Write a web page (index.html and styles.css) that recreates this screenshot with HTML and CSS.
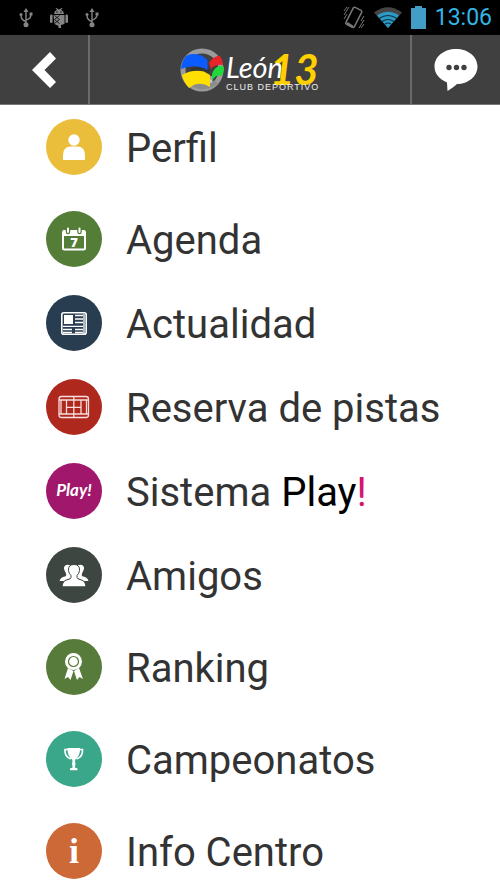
FILE: index.html
```html
<!DOCTYPE html>
<html lang="es">
<head>
<meta charset="utf-8">
<meta name="viewport" content="width=device-width, initial-scale=1">
<title>León 13 Club Deportivo</title>
<link rel="stylesheet" href="styles.css">
</head>
<body>
<div class="status">
  <div class="status-group notices">
    <svg viewBox="0 0 14 20" width="14" height="20" aria-hidden="true"><g fill="none" stroke="#858585" stroke-width="1.4"><path d="M7 3v14M7 13.500Q2 12 2 7.500M7 12Q12 11 12 6"/></g><g fill="#858585"><path d="M7 0l2.500 4h-5z"/><circle cx="2" cy="6.500" r="1.500"/><path d="M10.500 4.500h3v3h-3z"/><circle cx="7" cy="16.800" r="2.500"/></g></svg>
    <svg viewBox="0 0 18 20" width="18" height="20" aria-hidden="true"><g fill="#858585"><path d="M4 6q.3-3.300 3-4.300L5.500 0l1-.3L8 1.300h2L11.500-.3l1 .3L11 1.700q2.700 1 3 4.300z"/><rect x="0" y="6.500" width="2.600" height="8.500" rx="1.200"/><rect x="15.400" y="6.500" width="2.600" height="8.500" rx="1.200"/><path d="M3.500 7h11v9l-3.500 1v3H8.500v-2L4.500 16z"/></g><g fill="none" stroke="#181818" stroke-width="1"><path d="M4.500 7.500l5 4-5 4M9.500 7.500l-5 4 5 4"/></g><circle cx="7" cy="4" r=".7"/><circle cx="11" cy="4" r=".7"/></svg>
    <svg viewBox="0 0 14 20" width="14" height="20" aria-hidden="true"><g fill="none" stroke="#858585" stroke-width="1.4"><path d="M7 3v14M7 13.500Q2 12 2 7.500M7 12Q12 11 12 6"/></g><g fill="#858585"><path d="M7 0l2.500 4h-5z"/><circle cx="2" cy="6.500" r="1.500"/><path d="M10.500 4.500h3v3h-3z"/><circle cx="7" cy="16.800" r="2.500"/></g></svg>
  </div>
  <div class="status-group system">
    <svg viewBox="0 0 22 25" width="22" height="25" aria-hidden="true"><g fill="none" stroke="#777"><rect x="6" y="3" width="9.500" height="19" rx="1.500" stroke-width="1.500" transform="rotate(27 11 12.500)"/><path d="M1 6l3-4M1 10l5-8M1 14l3-5M21 19l-3 4M21 15l-5 8M21 11l-3 5"/></g><path d="M4 18l6 4" stroke="#777" stroke-width="2.500"/></svg>
    <svg viewBox="0 0 28 21" width="28" height="21" aria-hidden="true"><path fill="#444" d="M14 21L0 5.500Q14-5 28 5.500z"/><path fill="#2d9ac4" d="M14 21L3 8.500Q14 1 25 8.500z"/><g fill="none" stroke="#0b3040" stroke-width="1.200"><path d="M5 11.500q9-6 18 0M8 14.500q6-4 12 0M11 17q3-2 6 0"/></g></svg>
    <svg viewBox="0 0 15 23" width="15" height="23" aria-hidden="true"><path fill="#429ec6" d="M4 0h7v2h4v21H0V2h4z"/></svg>
    <time class="clock">13:06</time>
  </div>
</div>

<header class="bar">
  <button class="bar-button back" type="button" aria-label="Volver">
    <svg viewBox="0 0 24 36" width="24" height="36" aria-hidden="true"><path fill="#fff" d="M18 0l6 6.500L12.500 18 24 30l-6 6L0 18z"/></svg>
  </button>
  <div class="brand">
    <svg class="logo" viewBox="0 0 140 50" width="140" height="50" role="img" aria-label="León 13 Club Deportivo">
      <circle cx="22" cy="25" r="19" fill="none" stroke="#9b9b9b" stroke-width="5"/>
      <path d="M6 37Q22 28 38 38Q22 51 6 37z" fill="#8b8b8b"/>
      <path d="M9 24q12-5 22 1l-4 4-14-1z" fill="#343434"/>
      <path fill="#0b5cff" d="M1 24Q2 12 9 9.500Q20 7 27.500 15v10Q15 18 1 24z"/>
      <path fill="#e82428" d="M29 18Q34 10 40 11q3 4 3 9-8-1-12 4z"/>
      <path fill="#20d83c" d="M32 34q-1-8 5-12 5-2 7 0 0 7-3 9-5-2-9 5z"/>
      <path fill="#ffdf00" d="M2 30Q12 24 24 26.500l6 3.500v12Q19 35 9 43Q4 38 2 30z"/>
      <path d="M31 31v7" stroke="#fff" stroke-width="1"/>
      <text class="logo-number" x="90" y="40">13</text>
      <text class="logo-name" x="46" y="33">León</text>
      <text class="logo-caption" x="46" y="45">CLUB DEPORTIVO</text>
    </svg>
  </div>
  <button class="bar-button chat" type="button" aria-label="Mensajes">
    <svg viewBox="0 0 44 42" width="44" height="42" aria-hidden="true"><path fill="#fff" d="M22 0C34 0 43.500 7.500 43.500 17.500S34 35 23 35q-3 3-9.500 7l-.5-8.500C5 30 .5 24.500.5 17.500.5 7.500 10 0 22 0z"/><g fill="#404040"><circle cx="15" cy="18.500" r="2.700"/><circle cx="22.500" cy="18.500" r="2.700"/><circle cx="30" cy="18.500" r="2.700"/></g></svg>
  </button>
</header>

<nav aria-label="Menú principal">
  <ul class="menu">
    <li class="roomy"><a class="item" href="#perfil">
      <svg class="icon perfil" viewBox="0 0 56 56" aria-hidden="true"><g fill="#fff"><circle cx="28" cy="21" r="5.700"/><path d="M17 41v-5q0-8.500 8-8.500h6q8 0 8 8.500v5z"/></g></svg>
      <span>Perfil</span></a></li>
    <li><a class="item" href="#agenda">
      <svg class="icon agenda" viewBox="0 0 56 56" aria-hidden="true"><rect x="17" y="20" width="22" height="18.500" rx="1.500" fill="none" stroke="#fff" stroke-width="2"/><path fill="#fff" d="M17 19h22v6H17z"/><g stroke="#547d38" stroke-width="4.500" stroke-linecap="round"><path d="M22 18v3M33.500 18v3"/></g><g stroke="#fff" stroke-width="2" stroke-linecap="round"><path d="M22 17.500v3.500M33.500 17.500v3.500"/></g><text class="icon-day" x="28" y="36">7</text></svg>
      <span>Agenda</span></a></li>
    <li><a class="item" href="#actualidad">
      <svg class="icon actualidad" viewBox="0 0 56 56" aria-hidden="true"><rect x="15.800" y="17.800" width="24.400" height="21.400" rx="2" fill="none" stroke="#fff" stroke-width="1.600"/><path fill="#fff" d="M18 20h9v9h-9z"/><g fill="none" stroke="#fff" stroke-width="1.300"><path d="M29 20.500h8M29 24h8M29 27.500h8M17 31.300h20M17 34.500h9M17 37.500h9M29 34.500h8M29 37.500h8M38 19v20"/></g></svg>
      <span>Actualidad</span></a></li>
    <li><a class="item" href="#pistas">
      <svg class="icon pistas" viewBox="0 0 56 56" aria-hidden="true"><g fill="none" stroke="#f8dedc" stroke-width="1.300"><rect x="13" y="17.500" width="29.500" height="21" rx="2.500"/><path d="M13 21h29.500M13 35h29.500M27.800 17.500v21M20.500 21v14M35 21v14M20.500 28.300H35M15 21v14M40.500 21v14"/></g></svg>
      <span>Reserva de pistas</span></a></li>
    <li><a class="item" href="#play">
      <svg class="icon play" viewBox="0 0 56 56" aria-hidden="true"><text class="icon-play" x="28" y="33">Play!</text></svg>
      <span>Sistema <span class="play-word">Play</span><span class="play-mark">!</span></span></a></li>
    <li class="roomy"><a class="item" href="#amigos">
      <svg class="icon amigos" viewBox="0 0 56 56" aria-hidden="true"><g fill="#fff"><path d="M20 18q4-1 6 2l-1 11-6 3h-5.500q1-4 5.500-4.500 2-1 .8-3.500-3.800-6 .2-8z"/><path d="M36 18q-4-1-6 2l1 11 6 3h5.500q-1-4-5.500-4.500-2-1-.8-3.500 3.800-6-.2-8z"/><path stroke="#3e4641" stroke-width="1" d="M28 17.500q6 0 5.500 6-.3 3-2.500 5v2q0 1.500 4 2.300 4.500 1 5 7H16q.5-6 5-7 4-.8 4-2.300v-2q-2.200-2-2.500-5-.5-6 5.500-6z"/></g></svg>
      <span>Amigos</span></a></li>
    <li class="roomy"><a class="item" href="#ranking">
      <svg class="icon ranking" viewBox="0 0 56 56" aria-hidden="true"><g fill="#fff"><path d="M22 29l5.500 3-3 9-2.500-3-3.500 2zM33 29l-5 3 3 9 2.500-3 3.500 2z"/><circle cx="27.500" cy="22.500" r="8.500"/></g><circle cx="27.500" cy="22.500" r="5" fill="none" stroke="#577b3a" stroke-width="1.200"/></svg>
      <span>Ranking</span></a></li>
    <li class="roomy"><a class="item" href="#campeonatos">
      <svg class="icon campeonatos" viewBox="0 0 56 56" aria-hidden="true"><path fill="#fff" d="M21.500 17h12.500q.5 8-4.700 11.500-.5 2 .2 4l-.7 4 2.700 1v1.800h-7.500v-1.800l2.700-1-.7-4q.7-2 .2-4-5.200-3.500-4.700-11.500z"/><path fill="none" stroke="#fff" stroke-width="1.700" d="M22 18.500h-3q-.5 7.500 6 9.500M33.500 18.500h3q.5 7.500-6 9.500"/></svg>
      <span>Campeonatos</span></a></li>
    <li><a class="item" href="#info">
      <svg class="icon info" viewBox="0 0 56 56" aria-hidden="true"><text class="icon-info" x="28" y="40">i</text></svg>
      <span>Info Centro</span></a></li>
  </ul>
</nav>
</body>
</html>
```
FILE: styles.css
```css
* {
  box-sizing: border-box;
}

body {
  margin: 0;
  background: #fff;
  font-family: Roboto, "Liberation Sans", sans-serif;
}

svg {
  display: block;
  flex: none;
}

.status {
  display: flex;
  justify-content: space-between;
  align-items: center;
  height: 35px;
  padding: 0 8px 0 19px;
  background: #000;
}

.status-group {
  display: flex;
  align-items: center;
}

.notices {
  gap: 17px;
}

.system {
  gap: 9px;
}

.clock {
  color: #33b5e5;
  font-size: 23px;
  line-height: 37px;
}

.bar {
  display: flex;
  height: 70px;
  background: #404040;
  border-bottom: 1px solid #777;
}

.bar-button {
  display: flex;
  align-items: center;
  justify-content: center;
  width: 90px;
  padding: 0;
  border: 0 solid #6a6a6a;
  background: none;
}

.back {
  border-right-width: 2px;
}

.chat {
  border-left-width: 2px;
}

.brand {
  display: flex;
  flex: 1;
  align-items: center;
  justify-content: center;
}

.logo {
  overflow: visible;
}

.logo-name {
  fill: #fff;
  font-family: Lato, sans-serif;
  font-size: 29px;
  font-style: italic;
}

.logo-number {
  fill: #ffd000;
  font-family: Lato, sans-serif;
  font-size: 42px;
  font-style: italic;
  font-weight: 700;
}

.logo-caption {
  fill: #eee;
  font-family: "Liberation Sans", sans-serif;
  font-size: 9px;
  letter-spacing: 1px;
}

.menu {
  display: flex;
  flex-direction: column;
  gap: 24px;
  margin: 0;
  padding: 14px 16px 6px 46px;
  list-style: none;
}

.roomy {
  padding-bottom: 8px;
}

.item {
  display: flex;
  align-items: flex-start;
  gap: 24px;
  color: #333;
  font-size: 40px;
  line-height: 60px;
  text-decoration: none;
  white-space: nowrap;
}

.icon {
  width: 56px;
  height: 56px;
  border-radius: 50%;
}

.perfil { background: #eabd3b; }
.agenda { background: #547d38; }
.actualidad { background: #293d50; }
.pistas { background: #ae281e; }
.play { background: #a0176b; }
.amigos { background: #3e4641; }
.ranking { background: #577b3a; }
.campeonatos { background: #3aa78b; }
.info { background: #cc6936; }

.icon-day {
  fill: #fff;
  font-family: "Open Sans", sans-serif;
  font-size: 13px;
  font-weight: 800;
  text-anchor: middle;
}

.icon-info {
  fill: #fff;
  font-family: "Liberation Serif", serif;
  font-size: 36px;
  font-weight: 700;
  text-anchor: middle;
}

.icon-play {
  fill: #fff;
  font-family: Lato, sans-serif;
  font-size: 17px;
  font-style: italic;
  font-weight: 700;
  text-anchor: middle;
}

.play-word {
  color: #000;
}

.play-mark {
  color: #d6146f;
}
```
